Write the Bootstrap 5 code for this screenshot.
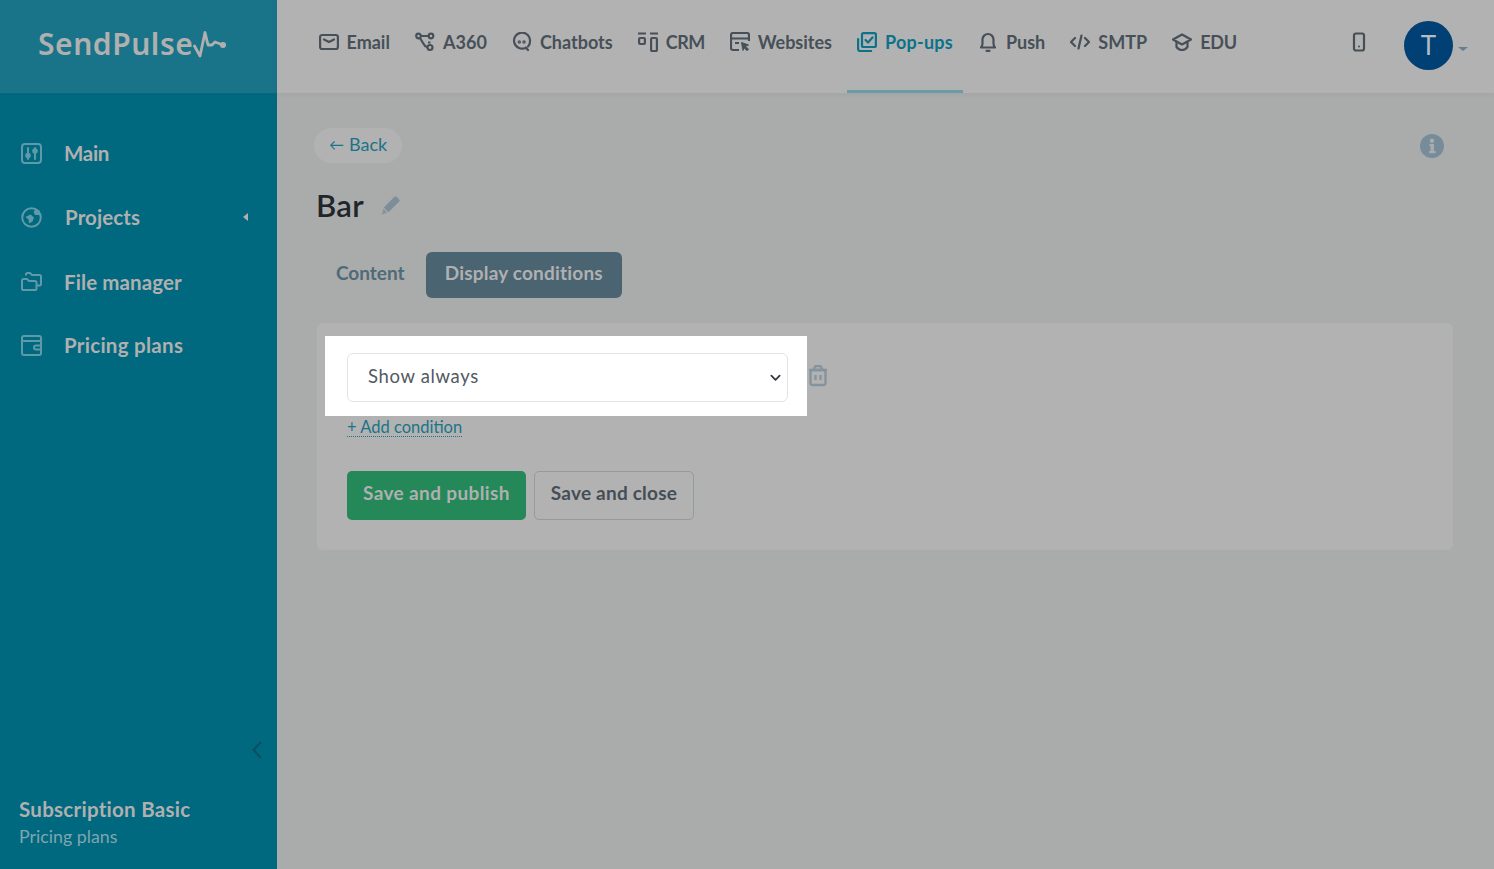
<!DOCTYPE html>
<html lang="en">
<head>
<meta charset="utf-8">
<title>SendPulse</title>
<link href="https://cdn.jsdelivr.net/npm/bootstrap@5.3.0/dist/css/bootstrap.min.css" rel="stylesheet">
<style>
html,body{height:100%}
body{font-family:"Lato","Liberation Sans",sans-serif;background:#a9acab;color:#212529;overflow:hidden}
svg{display:block;flex:none}
.shell{height:869px}
.side{width:277px;background:#00687f;flex:none}
.logo-box{height:93px;background:#1a7489;padding:0 0 5px 38px;color:#b0b0b0}
.logo-word{font-family:"Noto Sans",sans-serif;font-weight:600;font-size:30px;letter-spacing:.55px;line-height:1}
.side-menu{padding-top:28px}
.side-link{height:64px;padding-left:21px;color:#b0b0b0;font-weight:700;font-size:20.5px;text-decoration:none;letter-spacing:.1px}
.side-link span{margin-left:22px}
.side-link:nth-child(1) span{letter-spacing:-.3px}
.side-link:nth-child(2) span{margin-left:23px}
.side-link:nth-child(3) span{padding-top:2px}
.side-link:nth-child(4) span{letter-spacing:.28px}
.side-caret{margin-left:auto;margin-right:29px;width:0;height:0;border:4.5px solid transparent;border-right:5px solid #b0b0b0;border-left:0}
.side-ico{color:#5f9aa9}
.collapse-ico{margin:0 15px 37px auto;color:#0b4f63}
.side-foot{padding:0 0 19px 19px}
.sub-name{font-size:20.5px;font-weight:700;color:#b0b0b0;line-height:26px;letter-spacing:.27px}
.sub-link{font-size:17.8px;color:#7fa6b0;line-height:28px}
.top{height:93px;background:#b2b2b2;padding-left:31px;box-shadow:0 1px 6px rgba(0,0,0,.05)}
.top-nav{gap:4.1px}
.top-item{height:93px;padding:0 10.5px;gap:8px;color:#475058;font-size:18px;font-weight:700;text-decoration:none;border-bottom:3px solid transparent;padding-bottom:6px}
.top-item:nth-child(4){letter-spacing:-.55px}
.top-item:nth-child(9){letter-spacing:-.2px}
.top-item.on{color:#0b7289;border-bottom-color:#6a9ca8;letter-spacing:.2px}
.phone-ico{color:#454f56;margin:-10px 38px 0 auto}
.avatar{width:49px;height:49px;background:#004074;color:#b4bcc4;font-size:26px;margin-bottom:3px}
.av-caret{width:0;height:0;border:5px solid transparent;border-top:4px solid #64808e;border-bottom:0;margin:5px 26px 0 5px}
.pane{padding:35px 41px 0 40px}
.back-row{margin-left:-3px}
.back-pill{background:#b2b2b2;color:#1a7489;font-size:18px;height:35px;padding:0 15px 2px;border-radius:18px;text-decoration:none;gap:5px}
.back-arrow{font-size:15px}
.title-row{margin:23px 0 0 -1px;height:38px;gap:17px}
.page-title{font-size:31px;font-weight:600;margin:0;line-height:38px;color:#212529;letter-spacing:.3px}
.tabs-row{margin-top:28px;height:46px}
.tab-link{padding:0 19px 4px;font-size:19px;font-weight:700;color:#4f6a78;text-decoration:none;border-radius:6px;letter-spacing:0}
.tab-link.on{background:#4a6472;color:#b0b0b0;margin-left:2px;letter-spacing:.2px}
.cond-card{margin-top:25px;height:227px;background:#b2b2b2;border:0;border-radius:6px;padding:13px 30px 0 8px}
.spot{background:#fff;padding:17px 19px 14px 22px;width:482px;flex:none}
.cond-select{width:441px;height:49px;font-size:18.5px;color:#525a62;padding:0 30px 2px 20px;border-color:#dde5e5;border-radius:6px;background-image:url("data:image/svg+xml,%3csvg xmlns='http://www.w3.org/2000/svg' viewBox='0 0 12 8'%3e%3cpath fill='none' stroke='%23343a40' stroke-width='2' stroke-linecap='round' stroke-linejoin='round' d='M1.500 1.500 6 6l4.500-4.500'/%3e%3c/svg%3e");background-size:11px 8px;background-position:right 6px center;letter-spacing:.65px}
.trash{color:#84939e;margin:0 0 0 1px}
.add-link{margin:2px 0 0 22px;font-size:16.5px;color:#1a7489;text-decoration:none;border-bottom:1px dotted #1a7489;line-height:18px;align-self:flex-start}
.btn-row{margin:34px 0 0 22px;gap:8px}
.act{height:49px;font-size:19px;font-weight:700;border-radius:5px;padding:0 16px 4px;display:flex;align-items:center;letter-spacing:.37px}
.act-go{background:#248858;border:0;color:#b0b0b0}
.act-go:hover{background:#248858;color:#b0b0b0}
.act-close{background:transparent;border:1px solid #929c9c;color:#454e56;letter-spacing:.22px}
.info-ico{color:#768c9b;margin:1px 9px 0 0}
.pen-ico{color:#7d8e99}
</style>
</head>
<body>
<div class="shell d-flex">
  <aside class="side d-flex flex-column">
    <div class="logo-box d-flex align-items-center">
      <span class="logo-word">SendPulse</span>
      <svg width="34" height="30" viewBox="0 0 34 30" fill="none" stroke="currentColor" stroke-width="2.800" stroke-linecap="round" stroke-linejoin="round"><path d="M1.500 17 7 27 12 3.500 15 16 19 16 22 13 30 16"/><circle cx="30" cy="16" r="3" fill="currentColor" stroke="none"/></svg>
    </div>
    <nav class="side-menu d-flex flex-column">
      <a class="side-link d-flex align-items-center" href="#">
        <svg class="side-ico" width="21" height="21" viewBox="0 0 21 21" fill="none" stroke="currentColor" stroke-width="2" stroke-linecap="round"><rect x="1" y="1" width="19" height="19" rx="3"/><path d="M7 5v11M14 5v11"/><circle cx="7" cy="12.500" r="1.800" fill="currentColor"/><circle cx="14" cy="8" r="1.800" fill="currentColor"/></svg>
        <span>Main</span>
      </a>
      <a class="side-link d-flex align-items-center" href="#">
        <svg class="side-ico" width="21" height="21" viewBox="0 0 21 21" fill="none" stroke="currentColor" stroke-width="2"><circle cx="10.500" cy="10.500" r="9.300"/><path d="M15 1.500l-2.500 3.500 1.500 3 5 0 0-4zM4.500 10l5-2.500 3.500 3-1.500 4-3.500 2-.5-4z" fill="currentColor" stroke="none"/></svg>
        <span>Projects</span>
        <i class="side-caret"></i>
      </a>
      <a class="side-link d-flex align-items-center" href="#">
        <svg class="side-ico" width="21" height="21" viewBox="0 0 21 21" fill="none" stroke="currentColor" stroke-width="2" stroke-linejoin="round"><path d="M1 9.500a1.500 1.500 0 0 1 1.500-1.500H6l2 2h6a1.500 1.500 0 0 1 1.500 1.500V18a1 1 0 0 1-1 1H2a1 1 0 0 1-1-1z"/><path d="M5 4.500V3.500A1.500 1.500 0 0 1 6.500 2H9l2 2h7.500A1.500 1.500 0 0 1 20 5.500V13a1.500 1.500 0 0 1-1.500 1.500H16"/></svg>
        <span>File manager</span>
      </a>
      <a class="side-link d-flex align-items-center" href="#">
        <svg class="side-ico" width="21" height="21" viewBox="0 0 21 21" fill="none" stroke="currentColor" stroke-width="2" stroke-linejoin="round"><rect x="1" y="1" width="19" height="19" rx="2"/><path d="M1 6h19M20 10.500h-5a2 2 0 0 0 0 4h5"/></svg>
        <span>Pricing plans</span>
      </a>
    </nav>
    <svg class="collapse-ico mt-auto" width="10" height="18" viewBox="0 0 10 18" fill="none" stroke="currentColor" stroke-width="2"><path d="M9 1 1.500 9 9 17"/></svg>
    <div class="side-foot">
      <div class="sub-name">Subscription Basic</div>
      <div class="sub-link">Pricing plans</div>
    </div>
  </aside>
  <div class="flex-grow-1 d-flex flex-column">
    <header class="top d-flex align-items-center">
      <nav class="top-nav d-flex">
        <a class="top-item d-flex align-items-center" href="#"><svg width="20" height="18" viewBox="0 0 20 18" fill="none" stroke="currentColor" stroke-width="2.200" stroke-linejoin="round" stroke-linecap="round"><rect x="1.100" y="2" width="17.800" height="14" rx="2"/><path d="M5 6.500l5 2.500 5-2.500"/></svg>Email</a>
        <a class="top-item d-flex align-items-center" href="#"><svg width="20" height="20" viewBox="0 0 20 20" fill="none" stroke="currentColor" stroke-width="2.200"><circle cx="3.500" cy="4" r="2.300"/><circle cx="16" cy="4" r="2.300"/><circle cx="15" cy="15.500" r="2.500"/><path d="M6 4h7.500M5 6l3 5c.8 1.600 2 3.500 4 4M13 10.500h2.500"/></svg>A360</a>
        <a class="top-item d-flex align-items-center" href="#"><svg width="20" height="20" viewBox="0 0 20 20" fill="none" stroke="currentColor" stroke-width="2.200" stroke-linecap="round"><path d="M16 18l-2.200-2.300A8 8 0 1 1 18 9.500c0 2-.7 3.800-2 5"/><circle cx="7.300" cy="10" r=".6" fill="currentColor"/><circle cx="12" cy="10" r=".6" fill="currentColor"/></svg>Chatbots</a>
        <a class="top-item d-flex align-items-center" href="#"><svg width="20" height="20" viewBox="0 0 20 20" fill="none" stroke="currentColor" stroke-width="2.200"><path d="M0 1.500h8M12 1.500h8"/><rect x="1.100" y="6" width="5.800" height="6" rx="1"/><rect x="13.100" y="6" width="5.800" height="13" rx="1"/></svg>CRM</a>
        <a class="top-item d-flex align-items-center" href="#"><svg width="20" height="20" viewBox="0 0 20 20" fill="none" stroke="currentColor" stroke-width="2.200" stroke-linejoin="round"><path d="M9 18H3a2 2 0 0 1-2-2V3a2 2 0 0 1 2-2h14a2 2 0 0 1 2 2v6M1 6.500h18M5 11h4"/><path d="M11.500 10.500l7 2.500-3 1.200 3 3-1.500 1.500-3-3-1 2.800z" fill="currentColor" stroke-width="1"/></svg>Websites</a>
        <a class="top-item on d-flex align-items-center" href="#"><svg width="20" height="20" viewBox="0 0 20 20" fill="none" stroke="currentColor" stroke-width="2.200" stroke-linejoin="round" stroke-linecap="round"><rect x="5" y="1.100" width="13.900" height="13.900" rx="1.500"/><path d="M1.100 7v10a2 2 0 0 0 2 2h11"/><path d="M8.500 8l2.500 2.500 4.500-5"/></svg>Pop-ups</a>
        <a class="top-item d-flex align-items-center" href="#"><svg width="20" height="20" viewBox="0 0 20 20" fill="none" stroke="currentColor" stroke-width="2.200" stroke-linejoin="round" stroke-linecap="round"><path d="M3 15.500c1-1 1.500-2 1.500-4V7.500a5.500 5.500 0 0 1 11 0v4c0 2 .5 3 1.500 4z"/><path d="M8.500 18.800h3"/></svg>Push</a>
        <a class="top-item d-flex align-items-center" href="#"><svg width="20" height="18" viewBox="0 0 20 18" fill="none" stroke="currentColor" stroke-width="2.200" stroke-linecap="round" stroke-linejoin="round"><path d="M5 5 1 9l4 4M15 5l4 4-4 4M11.500 2.500l-3 13"/></svg>SMTP</a>
        <a class="top-item d-flex align-items-center" href="#"><svg width="20" height="20" viewBox="0 0 20 20" fill="none" stroke="currentColor" stroke-width="2.200" stroke-linejoin="round"><path d="M10 2.500 19 7.500l-9 5-9-5z"/><path d="M4.500 10v5c1.500 2 3.500 3 5.500 3s4-1 5.500-3v-5"/></svg>EDU</a>
      </nav>
      <svg class="phone-ico" width="14" height="20" viewBox="0 0 14 20" fill="none" stroke="currentColor" stroke-width="2.200"><rect x="2" y="1.500" width="10" height="17" rx="2"/><circle cx="7" cy="14.500" r="1" fill="currentColor" stroke="none"/></svg>
      <div class="avatar rounded-circle d-flex align-items-center justify-content-center">T</div>
      <i class="av-caret"></i>
    </header>
    <main class="pane flex-grow-1">
      <div class="back-row d-flex align-items-center justify-content-between">
        <a class="back-pill d-inline-flex align-items-center" href="#"><span class="back-arrow">←</span>Back</a>
        <svg class="info-ico" width="24" height="24" viewBox="0 0 24 24"><circle cx="12" cy="12" r="12" fill="currentColor"/><path d="M9.500 10h4.500v7h1.500v2.200h-6.300V17h1.300v-4.800H9.500zM12 4.500a2.200 2.200 0 1 1 0 4.400 2.200 2.200 0 0 1 0-4.400z" fill="#a9acab"/></svg>
      </div>
      <div class="title-row d-flex align-items-center">
        <h1 class="page-title">Bar</h1>
        <svg class="pen-ico" width="19" height="19" viewBox="0 0 19 19"><path d="M13.500.8a1.500 1.500 0 0 1 2 0l2.700 2.700a1.500 1.500 0 0 1 0 2L7.500 16.200 2.800 11.500z" fill="currentColor"/><path d="M2.300 12.500l4.200 4.200-3.300 1-2.500.8.700-2.500z" fill="currentColor" opacity=".75"/></svg>
      </div>
      <div class="tabs-row d-flex">
        <a class="tab-link d-flex align-items-center" href="#">Content</a>
        <a class="tab-link on d-flex align-items-center" href="#">Display conditions</a>
      </div>
      <section class="cond-card card">
        <div class="d-flex align-items-center">
          <div class="spot">
            <select class="form-select cond-select" aria-label="Condition"><option>Show always</option></select>
          </div>
          <svg class="trash" width="20" height="22" viewBox="0 0 20 22" fill="none" stroke="currentColor" stroke-width="2.300"><path d="M1 5h18M6.500 5V3a2 2 0 0 1 2-2h3a2 2 0 0 1 2 2v2"/><rect x="2.500" y="5" width="15" height="15" rx="2"/><path d="M7.500 10v5M12.500 10v5"/></svg>
        </div>
        <a class="add-link" href="#">+ Add condition</a>
        <div class="btn-row d-flex">
          <button class="btn act act-go" type="button">Save and publish</button>
          <button class="btn act act-close" type="button">Save and close</button>
        </div>
      </section>
    </main>
  </div>
</div>
</body>
</html>
